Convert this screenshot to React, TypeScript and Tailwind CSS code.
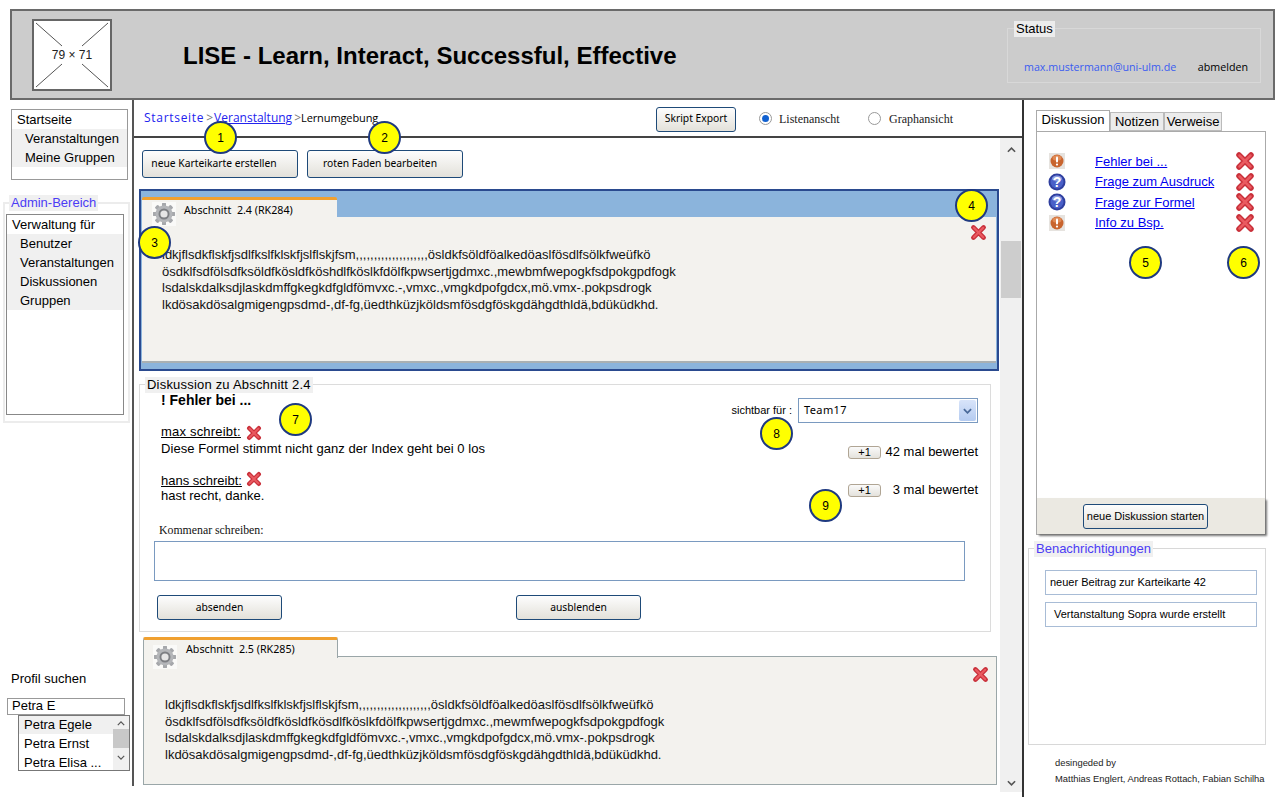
const sans = "font-['Liberation_Sans',Arial,sans-serif]"
const hand = "font-['Open_Sans',sans-serif]"
const tahoma = "font-['Noto_Sans',sans-serif]"
const serif = "font-['Liberation_Serif',serif]"

const cardLines1 = [
    "ldkjflsdkflskfjsdlfkslfklskfjslflskjfsm,,,,,,,,,,,,,,,,,,,,ösldkfsöldföalkedöaslfösdlfsölkfweüfkö",
    "ösdklfsdfölsdfksöldfkösldfköshdlfköslkfdölfkpwsertjgdmxc.,mewbmfwepogkfsdpokgpdfogk",
    "lsdalskdalksdjlaskdmffgkegkdfgldfömvxc.-,vmxc.,vmgkdpofgdcx,mö.vmx-.pokpsdrogk",
    "lkdösakdösalgmigengpsdmd-,df-fg,üedthküzjköldsmfösdgföskgdähgdthldä,bdüküdkhd.",
]
const cardLines2 = [
    "ldkjflsdkflskfjsdlfkslfklskfjslflskjfsm,,,,,,,,,,,,,,,,,,,,ösldkfsöldföalkedöaslfösdlfsölkfweüfkö",
    "ösdklfsdfölsdfksöldfkösldfkösdlfköslkfdölfkpwsertjgdmxc.,mewmfwepogkfsdpokgpdfogk",
    "lsdalskdalksdjlaskdmffgkegkdfgldfömvxc.-,vmxc.,vmgkdpofgdcx,mö.vmx-.pokpsdrogk",
    "lkdösakdösalgmigengpsdmd-,df-fg,üedthküzjköldsmfösdgföskgdähgdthldä,bdüküdkhd.",
]

const XIcon = ({ className = "w-[16px] h-[16px]" }: { className?: string }) => (
    <svg viewBox="0 0 20 20" className={className}>
        <path d="M4 4 L16 16 M16 4 L4 16" stroke="#c9303a" strokeWidth="5.5" strokeLinecap="round" />
        <path d="M4.5 4.5 L15.5 15.5 M15.5 4.5 L4.5 15.5" stroke="#ea5a60" strokeWidth="2.5" strokeLinecap="round" />
    </svg>
)

const Gear = () => {
    const teeth = [0, 45, 90, 135, 180, 225, 270, 315]
    return (
        <svg viewBox="0 0 24 24" className="w-[24px] h-[24px] bg-white/60">
            {teeth.map((a) => (
                <rect key={a} x="10" y="1" width="4" height="22" rx="1" fill="#a6a8ab" transform={`rotate(${a} 12 12)`} />
            ))}
            <circle cx="12" cy="12" r="8.5" fill="#b4b6b9" />
            <circle cx="12" cy="12" r="5.5" fill="#7d7f83" />
            <circle cx="12" cy="12" r="3.6" fill="#e6e6e6" />
        </svg>
    )
}

const InfoIcon = ({ kind }: { kind: "warn" | "help" }) => (
    kind === "warn" ? (
        <svg viewBox="0 0 16 16" className="w-[16px] h-[16px] bg-[#e6e3df]">
            <circle cx="8" cy="8" r="6.5" fill="#c8642e" />
            <ellipse cx="8" cy="5" rx="4.5" ry="2.8" fill="#e08a56" />
            <rect x="7" y="3.5" width="2" height="6" rx="1" fill="#fff" />
            <circle cx="8" cy="11.6" r="1.1" fill="#fff" />
        </svg>
    ) : (
        <svg viewBox="0 0 18 18" className="w-[18px] h-[18px]">
            <circle cx="9" cy="9" r="8.5" fill="#2f3f9f" />
            <circle cx="9" cy="9" r="6.5" fill="#4a60c8" />
            <ellipse cx="9" cy="5.5" rx="5" ry="3" fill="#8a9be0" />
            <text x="9" y="14" textAnchor="middle" fontSize="14" fontWeight="700" fill="#fff" fontFamily="Liberation Sans">?</text>
        </svg>
    )
)

const Badge = ({ n, className }: { n: number; className: string }) => (
    <div className={`absolute w-[33px] h-[33px] rounded-full bg-[#ffff00] border-2 border-[#1f3a80] flex items-center justify-center text-[12px] text-black ${sans} ${className}`}>{n}</div>
)

const Btn = ({ label, className = "", size = `text-[10.3px] ${tahoma}` }: { label: string; className?: string; size?: string }) => (
    <button className={`border border-[#1e4a78] rounded-[3px] bg-linear-to-b from-[#fdfdfd] to-[#e3e1da] whitespace-nowrap text-black ${size} ${className}`}>{label}</button>
)

const Legend = ({ label, className }: { label: string; className: string }) => (
    <div className={`absolute h-[16px] leading-[16px] bg-[#f0f0f0] text-[13px] whitespace-nowrap ${sans} ${className}`}>{label}</div>
)

const Card = ({ title, lines, active }: { title: string; lines: string[]; active: boolean }) => (
    <div className="relative">
        <div className="flex">
            <div className={`relative w-[195px] h-[21px] -mb-px z-10 bg-[#f3f2ee] border-t-[3px] border-[#f0a030] rounded-t-[2px] ${active ? "" : "border-x border-x-[#9aa6a8]"}`}>
                <div className={`absolute ${active ? "left-[10px] top-[2px]" : "left-[9px] top-[5px]"}`}><Gear /></div>
                <span className={`absolute left-[42px] text-[10.7px] whitespace-pre leading-[16px] text-black ${active ? "top-[2px]" : "top-[1px]"} ${tahoma}`}>{title}</span>
            </div>
            <div className={`flex-1 ${active ? "" : "border-b border-[#9aa6a8]"}`}></div>
        </div>
        <div className={`relative bg-[#f3f2ee] ${active ? "h-[146px] pt-[30px] pl-[20px] border-b-2 border-[#a9b0b3]" : "h-[128px] pt-[40px] pl-[21px] border-x border-b border-[#9aa6a8]"}`}>
            <XIcon className={`absolute w-[17px] h-[17px] ${active ? "right-[9px] top-[7px]" : "right-[7px] top-[9px]"}`} />
            {lines.map((l) => (
                <p key={l} className={`text-[13px] leading-[16.7px] text-[#111] whitespace-nowrap ${sans}`}>{l}</p>
            ))}
        </div>
    </div>
)

export default function App() {
    return (
        <div className={`relative w-[1280px] h-[800px] overflow-hidden bg-white ${sans}`}>
            {/* header */}
            <header className="ml-[10px] mt-[9px] w-[1265px] h-[91px] border-2 border-[#6a6a6a] bg-[#cccccc] flex items-center">
                <div className="ml-[20px] w-[80px] h-[72px] relative bg-white border-2 border-[#666]">
                    <svg viewBox="0 0 76 68" className="absolute inset-0 w-full h-full">
                        <path d="M2 2 L28 25 M74 2 L48 25 M2 66 L28 43 M74 66 L48 43" stroke="#555" strokeWidth="1" />
                    </svg>
                    <span className="absolute inset-0 flex items-center justify-center text-[12px] text-[#222]">79 × 71</span>
                </div>
                <h1 className="ml-[71px] mt-[2px] text-[24px] font-bold text-black whitespace-nowrap">LISE - Learn, Interact, Successful, Effective</h1>
                <div className="relative ml-auto mr-[12px] mt-[2px] w-[254px] h-[55px] border border-[#d8d8d8]">
                    <div className="absolute -top-[8px] left-[6px] px-[2px] h-[16px] leading-[16px] bg-[#ececec] text-[13px] text-black">Status</div>
                    <div className={`flex justify-between pl-[16px] pr-[12px] pt-[31px] text-[10.7px] leading-[14px] ${hand}`}>
                        <span className="text-[#3a5cf0]">max.mustermann@uni-ulm.de</span>
                        <span className="text-black">abmelden</span>
                    </div>
                </div>
            </header>

            <div className="flex h-[700px]">
                {/* left */}
                <aside className="w-[134px] h-[686px] shrink-0 border-r-2 border-[#555] flex flex-col text-[13px] text-black">
                    <div className="ml-[11px] mt-[9px] w-[117px] h-[71px] border border-[#999] leading-[19px]">
                        <div className="pl-[5px]">Startseite</div>
                        <div className="bg-[#f0f0f0] pl-[13px]">
                            <div>Veranstaltungen</div>
                            <div>Meine Gruppen</div>
                        </div>
                    </div>
                    <div className="relative ml-[3px] mt-[22px] w-[127px] h-[221px] border-2 border-[#ececec]">
                        <Legend label="Admin-Bereich" className="left-[4px] -top-[9px] px-[2px] text-[#4b3cf5]" />
                        <div className="ml-[1px] mt-[10px] w-[118px] h-[201px] border border-[#888] bg-white leading-[19px]">
                            <div className="pl-[5px]">Verwaltung für</div>
                            <div className="bg-[#f0f0f0] pl-[13px]">
                                <div>Benutzer</div>
                                <div>Veranstaltungen</div>
                                <div>Diskussionen</div>
                                <div>Gruppen</div>
                            </div>
                        </div>
                    </div>
                    <div className="ml-[11px] mt-[246px]">Profil suchen</div>
                    <div className="ml-[7px] mt-[9px] w-[118px] h-[17px] border border-[#999] pl-[4px] leading-[14px]">Petra E</div>
                    <div className="ml-[18px] w-[112px] h-[56px] border border-[#777] flex overflow-hidden leading-[19px]">
                        <div className="flex-1 min-w-0 whitespace-nowrap overflow-hidden -mt-px">
                            <div className="bg-[#f0f0f0] pl-[5px]">Petra Egele</div>
                            <div className="pl-[5px]">Petra Ernst</div>
                            <div className="pl-[5px]">Petra Elisa ...</div>
                        </div>
                        <div className="w-[16px] bg-[#f0f0f0] flex flex-col items-center text-[#555]">
                            <svg viewBox="0 0 10 6" className="w-[8px] h-[5px] mt-[5px]"><path d="M1 5 L5 1 L9 5" stroke="#555" strokeWidth="1.5" fill="none" /></svg>
                            <div className="w-full h-[19px] bg-[#c8c8c8] mt-[3px]"></div>
                            <svg viewBox="0 0 10 6" className="w-[8px] h-[5px] mt-[7px]"><path d="M1 1 L5 5 L9 1" stroke="#555" strokeWidth="1.5" fill="none" /></svg>
                        </div>
                    </div>
                </aside>

                {/* center */}
                <main className="w-[888px] h-[697px] shrink-0 flex flex-col">
                    <div className="h-[38px] shrink-0 border-b-2 border-[#444] flex items-center">
                        <div className={`ml-[10px] w-[512px] flex items-center text-[12px] whitespace-nowrap ${hand}`}>
                            <span className="text-[#2222ee] tracking-[0.7px]">Startseite</span>
                            <span className="text-[#777] ml-[2px]">&gt;</span>
                            <span className="text-[#2222ee] underline ml-[1px]">Veranstaltung</span>
                            <span className="text-[#777] ml-[2px]">&gt;</span>
                            <span className="text-black text-[11px] tracking-[-0.1px]">Lernumgebung</span>
                        </div>
                        <Btn label="Skript Export" className="w-[80px] h-[25px] mt-[2px]" />
                        <div className={`ml-[23px] mt-[1px] flex items-center text-[12px] text-[#222] ${serif}`}>
                            <span className="w-[13px] h-[13px] rounded-full border border-[#999] bg-white flex items-center justify-center"><span className="w-[7px] h-[7px] rounded-full bg-[#1060d0]"></span></span>
                            <span className="ml-[7px] w-[89px]">Listenanscht</span>
                            <span className="w-[13px] h-[13px] rounded-full border border-[#999] bg-white"></span>
                            <span className="ml-[8px]">Graphansicht</span>
                        </div>
                    </div>
                    <div className="flex flex-1 min-h-0">
                        <div className="w-[866px] shrink-0 pl-[5px] pt-[12px]">
                            <div className="flex gap-[9px] pl-[3px]">
                                <Btn label="neue Karteikarte erstellen" className="w-[156px] h-[28px] pr-[12px]" />
                                <Btn label="roten Faden bearbeiten" className="w-[156px] h-[28px] pr-[10px]" />
                            </div>
                            <div className="mt-[11px] w-[860px] h-[182px] border-2 border-[#2a4a8f] bg-[#8bb4dc] pt-[6px] px-[1px]">
                                <Card title="Abschnitt  2.4 (RK284)" lines={cardLines1} active />
                            </div>
                            <section className="relative mt-[13px] w-[852px] h-[248px] border border-[#dcdcdc]">
                                <Legend label="Diskussion zu Abschnitt 2.4" className="left-[5px] -top-[8px] px-[2px] tracking-[0.2px] text-black" />
                                <div className="flex justify-between pr-[12px]">
                                    <div className="pl-[21px] pt-[7px] text-[13px] leading-[16px] text-black">
                                        <div className="font-bold text-[14px]">! Fehler bei ...</div>
                                        <div className="mt-[16px] flex items-center h-[16px]"><span className="underline tracking-[0.2px]">max schreibt:</span><XIcon className="ml-[5px] w-[16px] h-[16px] mt-[2px]" /></div>
                                        <div className="mt-[1px] tracking-[0.06px]">Diese Formel stimmt nicht ganz der Index geht bei 0 los</div>
                                        <div className="mt-[16px] flex items-center h-[16px]"><span className="underline">hans schreibt:</span><XIcon className="ml-[4px] w-[16px] h-[16px] -mt-[4px]" /></div>
                                        <div className="-mt-px">hast recht, danke.</div>
                                    </div>
                                    <div className="pt-[13px] flex flex-col items-end text-[13px] text-black">
                                        <div className="flex items-center">
                                            <span className="mr-[6px] text-[11px]">sichtbar für :</span>
                                            <div className="w-[180px] h-[25px] border border-[#7a9ac0] flex items-center justify-between pl-[5px] pr-px">
                                                <span className={`text-[11px] tracking-[0.4px] ${tahoma}`}>Team17</span>
                                                <span className="w-[17px] h-[21px] rounded-[2px] bg-linear-to-b from-[#d8e4fa] to-[#b4cbf0] flex items-center justify-center">
                                                    <svg viewBox="0 0 10 6" className="w-[9px] h-[6px]"><path d="M1 1 L5 5 L9 1" stroke="#4a6a9a" strokeWidth="2" fill="none" /></svg>
                                                </span>
                                            </div>
                                        </div>
                                        <div className="mt-[21px] h-[16px] flex items-center w-[130px]">
                                            <span className="w-[33px] h-[13px] rounded-[3px] border border-[#b0a594] bg-linear-to-b from-[#fafafa] to-[#e4e2dc] flex items-center justify-center text-[11px] leading-none">+1</span>
                                            <span className="ml-auto">42 mal bewertet</span>
                                        </div>
                                        <div className="mt-[22px] h-[16px] flex items-center w-[130px]">
                                            <span className="w-[33px] h-[13px] rounded-[3px] border border-[#b0a594] bg-linear-to-b from-[#fafafa] to-[#e4e2dc] flex items-center justify-center text-[11px] leading-none">+1</span>
                                            <span className="ml-auto">3 mal bewertet</span>
                                        </div>
                                    </div>
                                </div>
                                <div className={`ml-[19px] mt-[18px] text-[11.8px] leading-[16px] text-[#111] ${serif}`}>Kommenar schreiben:</div>
                                <div className="ml-[14px] mt-[3px] w-[811px] h-[40px] border border-[#7a9ac0]"></div>
                                <div className="ml-[17px] mt-[14px] flex gap-[234px]">
                                    <Btn label="absenden" className="w-[125px] h-[25px]" />
                                    <Btn label="ausblenden" className="w-[125px] h-[25px]" />
                                </div>
                            </section>
                            <div className="mt-[5px] ml-[4px] w-[854px]">
                                <Card title="Abschnitt  2.5 (RK285)" lines={cardLines2} active={false} />
                            </div>
                        </div>
                        <div className="w-[22px] shrink-0 h-[654px] bg-[#f0f0f0] flex flex-col items-center">
                            <svg viewBox="0 0 10 6" className="w-[9px] h-[6px] mt-[9px]"><path d="M1 5 L5 1 L9 5" stroke="#555" strokeWidth="1.8" fill="none" /></svg>
                            <div className="w-[20px] h-[57px] mt-[88px] bg-[#cdcdcd]"></div>
                            <svg viewBox="0 0 10 6" className="w-[9px] h-[6px] mt-auto mb-[6px]"><path d="M1 1 L5 5 L9 1" stroke="#555" strokeWidth="1.8" fill="none" /></svg>
                        </div>
                    </div>
                </main>

                {/* right */}
                <aside className="w-[258px] h-[697px] shrink-0 border-l-2 border-[#333] pl-[12px] text-[13px] text-black">
                    <div className="flex items-end h-[31px] pt-[10px]">
                        <div className="w-[74px] h-[21px] border border-b-0 border-[#aaa] bg-white text-center leading-[18px]">Diskussion</div>
                        <div className="w-[54px] h-[19px] border border-[#bbb] bg-[#ececec] text-center leading-[18px]">Notizen</div>
                        <div className="w-[58px] h-[19px] border border-[#bbb] bg-[#ececec] text-center leading-[18px]">Verweise</div>
                    </div>
                    <div className="w-[230px] h-[404px] border border-[#aaa] flex flex-col">
                        <div className="flex-1 pt-[19px] pl-[10px] pr-[10px]">
                            {[
                                { kind: "warn", label: "Fehler bei ..." },
                                { kind: "help", label: "Frage zum Ausdruck" },
                                { kind: "help", label: "Frage zur Formel" },
                                { kind: "warn", label: "Info zu Bsp." },
                            ].map((item) => (
                                <div key={item.label} className="h-[20.6px] flex items-center">
                                    <span className="w-[20px] flex justify-center"><InfoIcon kind={item.kind as "warn" | "help"} /></span>
                                    <a className="ml-[28px] text-[13px] text-[#0000ee] underline whitespace-nowrap">{item.label}</a>
                                    <XIcon className="ml-auto w-[20px] h-[20px]" />
                                </div>
                            ))}
                        </div>
                        <div className="h-[36px] bg-[#ebe9e2] shadow-[2px_2px_2px_#777] flex items-center pl-[46px]">
                            <Btn label="neue Diskussion starten" size={`text-[11px] ${sans}`} className="w-[125px] h-[25px]" />
                        </div>
                    </div>
                    <div className="relative -ml-[8px] mt-[13px] w-[238px] h-[197px] border border-[#d8d8d8] pt-[21px] pl-[16px]">
                        <Legend label="Benachrichtigungen" className="left-[5px] -top-[8px] px-[2px] text-[#4b3cf5]" />
                        <div className="w-[212px] h-[25px] border border-[#a8bcd6] pl-[4px] leading-[23px] text-[11px]">neuer Beitrag zur Karteikarte 42</div>
                        <div className="w-[212px] h-[25px] mt-[7px] border border-[#a8bcd6] pl-[8px] leading-[23px] text-[11px]">Vertanstaltung Sopra wurde erstellt</div>
                    </div>
                    <div className="mt-[10px] ml-[19px] text-[9.4px] leading-[16px] text-[#222] whitespace-nowrap">
                        <div>desingeded by</div>
                        <div>Matthias Englert, Andreas Rottach, Fabian Schilha</div>
                    </div>
                </aside>
            </div>

            <Badge n={1} className="left-[204px] top-[121px]" />
            <Badge n={2} className="left-[368px] top-[121px]" />
            <Badge n={3} className="left-[138px] top-[226px]" />
            <Badge n={4} className="left-[955px] top-[189px]" />
            <Badge n={5} className="left-[1129px] top-[246px]" />
            <Badge n={6} className="left-[1227px] top-[246px]" />
            <Badge n={7} className="left-[279px] top-[403px]" />
            <Badge n={8} className="left-[760px] top-[417px]" />
            <Badge n={9} className="left-[809px] top-[489px]" />
        </div>
    )
}
